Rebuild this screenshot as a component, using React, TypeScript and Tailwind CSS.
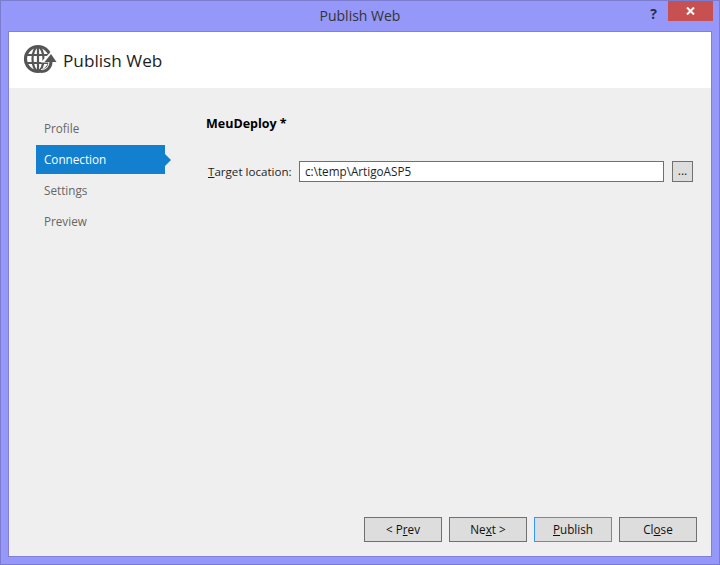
import { ReactNode } from "react";

function Btn({ children, focused }: { children: ReactNode; focused?: boolean }) {
  return (
    <button
      type="button"
      className={`flex h-[25px] w-[78px] items-center justify-center border bg-[#dddddd] text-[11.7px] text-[#101010] ${
        focused ? "border-[#3399ff]" : "border-[#707070]"
      }`}
    >
      {children}
    </button>
  );
}

function GlobeIcon() {
  return (
    <svg width="34" height="32" viewBox="0 0 34 32" fill="none" stroke="#555555" className="shrink-0">
      <circle cx="15" cy="15" r="12.5" strokeWidth="3.2" />
      <ellipse cx="15" cy="15" rx="5.5" ry="12" strokeWidth="2.2" />
      <path d="M15 3v24M4 11h22M4 19h22" strokeWidth="2.2" />
      <path d="M18 27.5c6 0 10-4 10-10" strokeWidth="5" stroke="#ffffff" />
      <path d="M20 17.5l8-8.5 6 8.5z" fill="#ffffff" stroke="#ffffff" strokeWidth="2" />
      <path d="M18 27.5c6 0 10-4 10-10" strokeWidth="3" />
      <path d="M21.5 18l6.5-8 5.5 8z" fill="#555555" stroke="none" />
    </svg>
  );
}

export default function App() {
  return (
    <div className="flex h-[565px] w-[720px] flex-col border border-[#7b7bd0] bg-[#9598f9] font-['Open_Sans',sans-serif] text-[11.7px]">
      <div className="relative flex h-[30px] shrink-0 items-center justify-center pb-[2px] text-[14px] text-[#333333]">
        Publish Web
        <div className="absolute right-[62px] top-[2px] text-[14px] font-bold text-[#2b2b4f]">?</div>
        <div className="absolute right-[6px] top-0 flex h-[20px] w-[45px] items-center justify-center bg-[#c75050]">
          <svg width="9" height="8" viewBox="0 0 9 8" stroke="#ffffff" strokeWidth="2">
            <path d="M1 0.5l7 7M8 0.5l-7 7" />
          </svg>
        </div>
      </div>

      <div className="mx-[7px] mb-[7px] flex min-h-0 flex-1 flex-col border border-[#8080d8] bg-[#efefef]">
        <div className="flex h-[56px] shrink-0 items-center gap-[6px] bg-white pl-[14px]">
          <GlobeIcon />
          <span className="pt-[2px] text-[17.2px] text-[#1e1e1e]">Publish Web</span>
        </div>

        <div className="flex min-h-0 flex-1">
          <ul className="ml-[27px] mt-[26px] w-[129px] shrink-0 text-[#666666]">
            <li className="mb-[2px] flex h-[29px] items-center pl-[8px]">Profile</li>
            <li className="relative mb-[2px] flex h-[29px] items-center bg-[#127fcf] pl-[8px] text-white">
              Connection
              <span className="absolute left-full top-[9px] h-0 w-0 border-y-[6px] border-l-[6px] border-y-transparent border-l-[#127fcf]" />
            </li>
            <li className="mb-[2px] flex h-[29px] items-center pl-[8px]">Settings</li>
            <li className="flex h-[29px] items-center pl-[8px]">Preview</li>
          </ul>

          <div className="ml-[41px] flex min-w-0 flex-1 flex-col">
            <div className="mt-[27px] text-[12.5px] font-bold text-black">MeuDeploy *</div>
            <div className="ml-[2px] mt-[27px] flex items-center">
              <span className="w-[91px] text-[11.6px] text-[#1e1e1e]">
                <span className="underline">T</span>arget location:
              </span>
              <input
                readOnly
                value="c:\temp\ArtigoASP5"
                className="h-[21px] w-[365px] border border-[#657381] bg-white pl-[5px] text-[11.7px] text-[#1e1e1e] outline-none"
              />
              <button
                type="button"
                className="ml-[8px] flex h-[21px] w-[21px] items-center justify-center border border-[#707070] bg-[#dddddd] text-[12px] leading-none text-[#1e1e1e]"
              >
                ...
              </button>
            </div>
          </div>
        </div>

        <div className="mb-[14px] mr-[14px] flex justify-end gap-[7px]">
          <Btn>
            &lt; P<span className="underline">r</span>ev
          </Btn>
          <Btn>
            Ne<span className="underline">x</span>t &gt;
          </Btn>
          <Btn focused>
            <span className="underline">P</span>ublish
          </Btn>
          <Btn>
            Cl<span className="underline">o</span>se
          </Btn>
        </div>
      </div>
    </div>
  );
}
